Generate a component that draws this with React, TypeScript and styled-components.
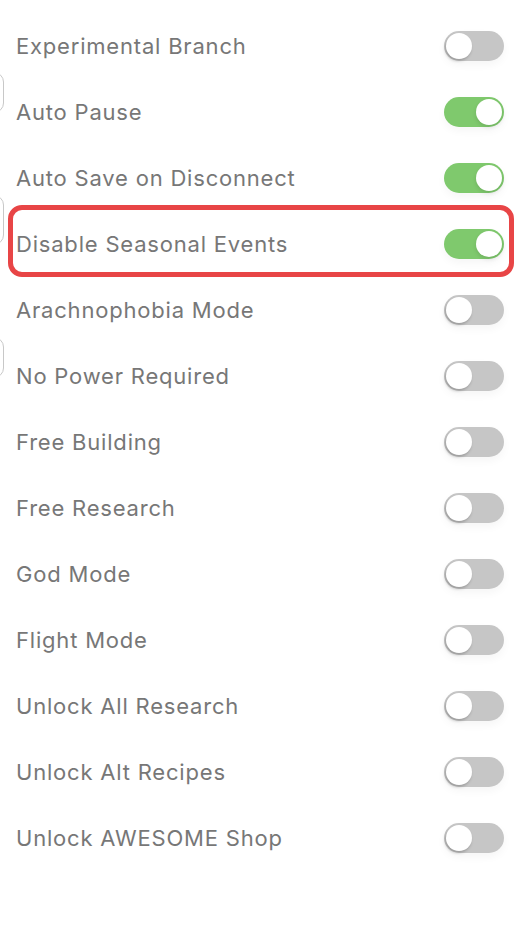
import React from 'react'
import styled, { createGlobalStyle } from 'styled-components'

const GlobalStyle = createGlobalStyle`
  html, body {
    margin: 0;
    padding: 0;
    background: #ffffff;
  }
  body {
    font-family: Inter, "Noto Sans", sans-serif;
    overflow: hidden;
  }
`

type Setting = {
  label: string
  on: boolean
  highlighted?: boolean
}

const settings: Setting[] = [
  {label: 'Experimental Branch', on: false},
  {label: 'Auto Pause', on: true},
  {label: 'Auto Save on Disconnect', on: true},
  {label: 'Disable Seasonal Events', on: true, highlighted: true},
  {label: 'Arachnophobia Mode', on: false},
  {label: 'No Power Required', on: false},
  {label: 'Free Building', on: false},
  {label: 'Free Research', on: false},
  {label: 'God Mode', on: false},
  {label: 'Flight Mode', on: false},
  {label: 'Unlock All Research', on: false},
  {label: 'Unlock Alt Recipes', on: false},
  {label: 'Unlock AWESOME Shop', on: false},
]

// edges of the neighbouring panel's buttons peeking in at the left
const peeks = [{top: 72, height: 41}, {top: 195, height: 50}, {top: 337, height: 41}]

export default function App() {
  return (
    <Page>
      <GlobalStyle />
      {peeks.map((p, i) => (
        <PeekEdge key={i} style={{top: p.top, height: p.height}} />
      ))}
      <List>
        {settings.map((s) => (
          <Row key={s.label} $highlighted={s.highlighted}>
            <Label>{s.label}</Label>
            <Toggle $on={s.on} role="switch" aria-checked={s.on}>
              <Knob $on={s.on} />
            </Toggle>
          </Row>
        ))}
      </List>
    </Page>
  )
}

const Page = styled.div`
  position: relative;
  width: 520px;
  height: 944px;
  background: #fff;
  overflow: hidden;
`

const PeekEdge = styled.div`
  position: absolute;
  left: -40px;
  width: 44px;
  border: 1px solid #c8c8c8;
  border-radius: 10px;
  box-sizing: border-box;
`

const List = styled.div`
  display: flex;
  flex-direction: column;
  padding: 13px 16px 0 16px;
`

const Row = styled.div<{ $highlighted?: boolean }>`
  position: relative;
  display: flex;
  align-items: center;
  justify-content: space-between;
  height: 66px;

  &::after {
    content: '';
    display: ${(p) => (p.$highlighted ? 'block' : 'none')};
    position: absolute;
    left: -8px;
    right: -10px;
    top: -6px;
    bottom: 0;
    border: 5px solid #e84546;
    border-radius: 14px;
    pointer-events: none;
  }
`

const Label = styled.span`
  font-size: 22px;
  letter-spacing: 0.8px;
  color: #777777;
  font-weight: 400;
`

const Toggle = styled.div<{ $on: boolean }>`
  position: relative;
  flex: none;
  width: 60px;
  height: 30px;
  border-radius: 15px;
  background: ${(p) => (p.$on ? '#7fc96d' : '#c6c6c6')};
  box-shadow: 0 4px 8px rgba(0, 0, 0, 0.04);
`

const Knob = styled.div<{ $on: boolean }>`
  position: absolute;
  top: 2px;
  left: ${(p) => (p.$on ? '32px' : '2px')};
  width: 26px;
  height: 26px;
  border-radius: 50%;
  background: #fff;
  box-shadow: ${(p) =>
    p.$on ? '0 2px 4px rgba(0, 0, 0, 0.12)' : '-1px 2px 3px rgba(0, 0, 0, 0.22)'};
`
